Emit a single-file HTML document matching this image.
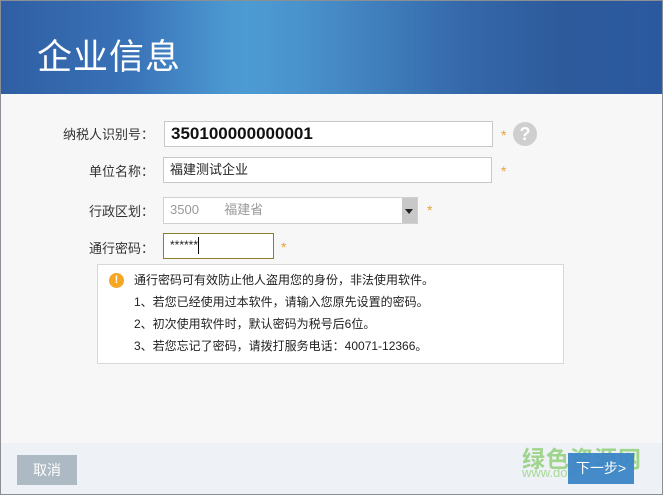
<!DOCTYPE html>
<html><head><meta charset="utf-8"><style>
*{margin:0;padding:0;box-sizing:border-box}
body{width:663px;height:495px;overflow:hidden;font-family:"Liberation Sans","Noto Sans CJK SC",sans-serif;background:#f7f7f7;position:relative;font-size:13px;color:#333}
.frame{position:absolute;left:0;top:0;width:663px;height:495px;border:1px solid #8a8f96;pointer-events:none;z-index:9}
.hdr{position:absolute;left:0;top:0;width:663px;height:94px;background:linear-gradient(90deg,#2f5ea3 0%,#3a73b8 20%,#4a95cf 33%,#4d9bd3 37%,#4a93cd 45%,#3568aa 70%,#2d5a9b 85%,#2b59a0 100%);border-top:1px solid #6b8dad}
.hdr h1{position:absolute;left:37px;top:28px;font-size:35px;font-weight:normal;color:#fff;letter-spacing:1px;font-family:"Noto Sans CJK SC",sans-serif}
.lbl{position:absolute;font-size:13px;color:#333;text-align:right;width:110px;left:44px}
.in{position:absolute;background:#fff;border:1px solid #c8c8c8;padding-left:6px;line-height:23px}
.star{position:absolute;color:#e8a23a;font-size:14px}
.foot{position:absolute;left:0;top:443px;width:663px;height:52px;background:#eef2f6}
</style></head><body>
<div class="hdr"><h1>企业信息</h1></div>
<div class="lbl" style="top:124px">纳税人识别号：</div>
<div class="in" style="left:164px;top:121px;width:329px;height:26px;font-weight:bold;font-size:17px;color:#111">350100000000001</div>
<div class="star" style="left:501px;top:127px">*</div>
<div style="position:absolute;left:513px;top:122px;width:24px;height:24px;border-radius:50%;background:#cfcfcf;color:#fff;font-weight:bold;font-size:18px;text-align:center;line-height:24px">?</div>
<div class="lbl" style="top:161px">单位名称：</div>
<div class="in" style="left:163px;top:157px;width:329px;height:26px;font-size:13px;color:#222">福建测试企业</div>
<div class="star" style="left:501px;top:163px">*</div>
<div class="lbl" style="top:201px">行政区划：</div>
<div class="in" style="left:163px;top:197px;width:255px;height:27px;color:#999;font-size:13px;border-color:#d0d0d0">3500&nbsp;&nbsp;&nbsp;&nbsp;&nbsp;&nbsp;&nbsp;福建省</div>
<div style="position:absolute;left:402px;top:198px;width:15px;height:25px;background:#c8c8c8"></div>
<div style="position:absolute;left:405px;top:209px;border-left:4px solid transparent;border-right:4px solid transparent;border-top:5px solid #222"></div>
<div class="star" style="left:427px;top:202px">*</div>
<div class="lbl" style="top:238px">通行密码：</div>
<div class="in" style="left:163px;top:233px;width:111px;height:26px;border-color:#8b7f2e;font-size:12px;color:#222">******<span style="display:inline-block;width:1px;height:17px;background:#000;vertical-align:middle"></span></div>
<div class="star" style="left:281px;top:239px">*</div>
<div style="position:absolute;left:97px;top:264px;width:467px;height:100px;background:#fff;border:1px solid #d8d8d8"></div>
<div style="position:absolute;left:109px;top:273px;width:15px;height:15px;border-radius:50%;background:#f5a623;color:#fff;font-size:11px;font-weight:bold;text-align:center;line-height:15px">!</div>
<div style="position:absolute;left:134px;top:269px;font-size:12px;line-height:22px;color:#222">通行密码可有效防止他人盗用您的身份，非法使用软件。<br>1、若您已经使用过本软件，请输入您原先设置的密码。<br>2、初次使用软件时，默认密码为税号后6位。<br>3、若您忘记了密码，请拨打服务电话：40071-12366。</div>
<div class="foot"></div>
<div style="position:absolute;left:17px;top:455px;width:60px;height:30px;background:#adbac3;color:#fff;text-align:center;line-height:30px;font-size:14px">取消</div>
<div style="position:absolute;left:522px;top:440px;color:#9fd48c;font-size:23px;font-weight:bold;letter-spacing:1px">绿色资源网</div>
<div style="position:absolute;left:522px;top:465px;color:#a8d898;font-size:13px">www.downcc.com</div>
<div style="position:absolute;left:568px;top:453px;width:66px;height:31px;background:#3d86c8;opacity:.95;color:#fff;text-align:center;line-height:31px;font-size:14px">下一步&gt;</div>
<div class="frame"></div>
</body></html>
